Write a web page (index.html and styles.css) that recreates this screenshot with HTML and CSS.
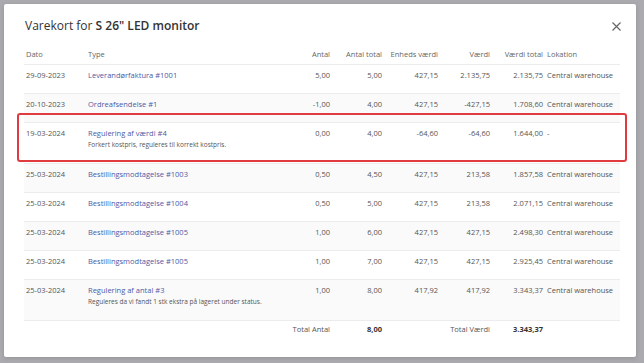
FILE: index.html
```html
<!DOCTYPE html>
<html lang="da">
<head>
  <meta charset="UTF-8">
  <meta name="viewport" content="width=device-width, initial-scale=1.0">
  <title>Varekort</title>
  <link rel="stylesheet" href="styles.css">
</head>
<body>
  <div class='modal'>
    <div class='modal-header'>
      <h1>Varekort for <b>S 26" LED monitor</b></h1>
      <button class='close' aria-label='Luk'>
        <svg width="9" height="9" viewBox="0 0 9 9"><path d="M0.5 0.5 L8.5 8.5 M8.5 0.5 L0.5 8.5" stroke="#666" stroke-width="1.2" fill="none"/></svg>
      </button>
    </div>
    <div class='table-wrap'>
      <table class='ledger'>
        <colgroup>
          <col style="width:62px"><col style="width:204px"><col style="width:42px"><col style="width:52px">
          <col style="width:56px"><col style="width:52px"><col style="width:53px"><col style="width:75px">
        </colgroup>
        <thead>
          <tr>
            <th>Dato</th><th>Type</th><th class='num'>Antal</th><th class='num'>Antal total</th>
            <th class='num'>Enheds værdi</th><th class='num'>Værdi</th><th class='num'>Værdi total</th><th>Lokation</th>
          </tr>
        </thead>
        <tbody>
          <tr>
            <td>29-09-2023</td><td><a href='#'>Leverandørfaktura #1001</a></td>
            <td class='num'>5,00</td><td class='num'>5,00</td><td class='num'>427,15</td><td class='num'>2.135,75</td><td class='num'>2.135,75</td><td>Central warehouse</td>
          </tr>
          <tr>
            <td>20-10-2023</td><td><a href='#'>Ordreafsendelse #1</a></td>
            <td class='num'>-1,00</td><td class='num'>4,00</td><td class='num'>427,15</td><td class='num'>-427,15</td><td class='num'>1.708,60</td><td>Central warehouse</td>
          </tr>
          <tr>
            <td>19-03-2024</td><td><a href='#'>Regulering af værdi #4</a><span class='note'>Forkert kostpris, reguleres til korrekt kostpris.</span></td>
            <td class='num'>0,00</td><td class='num'>4,00</td><td class='num'>-64,60</td><td class='num'>-64,60</td><td class='num'>1.644,00</td><td>-</td>
          </tr>
          <tr>
            <td>25-03-2024</td><td><a href='#'>Bestillingsmodtagelse #1003</a></td>
            <td class='num'>0,50</td><td class='num'>4,50</td><td class='num'>427,15</td><td class='num'>213,58</td><td class='num'>1.857,58</td><td>Central warehouse</td>
          </tr>
          <tr>
            <td>25-03-2024</td><td><a href='#'>Bestillingsmodtagelse #1004</a></td>
            <td class='num'>0,50</td><td class='num'>5,00</td><td class='num'>427,15</td><td class='num'>213,58</td><td class='num'>2.071,15</td><td>Central warehouse</td>
          </tr>
          <tr>
            <td>25-03-2024</td><td><a href='#'>Bestillingsmodtagelse #1005</a></td>
            <td class='num'>1,00</td><td class='num'>6,00</td><td class='num'>427,15</td><td class='num'>427,15</td><td class='num'>2.498,30</td><td>Central warehouse</td>
          </tr>
          <tr>
            <td>25-03-2024</td><td><a href='#'>Bestillingsmodtagelse #1005</a></td>
            <td class='num'>1,00</td><td class='num'>7,00</td><td class='num'>427,15</td><td class='num'>427,15</td><td class='num'>2.925,45</td><td>Central warehouse</td>
          </tr>
          <tr>
            <td>25-03-2024</td><td><a href='#'>Regulering af antal #3</a><span class='note'>Reguleres da vi fandt 1 stk ekstra på lageret under status.</span></td>
            <td class='num'>1,00</td><td class='num'>8,00</td><td class='num'>417,92</td><td class='num'>417,92</td><td class='num'>3.343,37</td><td>Central warehouse</td>
          </tr>
        </tbody>
        <tfoot>
          <tr>
            <td></td><td></td><td class='num'>Total Antal</td><td class='num'><b>8,00</b></td>
            <td></td><td class='num'>Total Værdi</td><td class='num'><b>3.343,37</b></td><td></td>
          </tr>
        </tfoot>
      </table>
      <div class='highlight'></div>
    </div>
  </div>
</body>
</html>
```

FILE: styles.css
```css
* {
  margin: 0;
  padding: 0;
  box-sizing: border-box;
}
body {
  background-color: #ababaf;
  padding: 4px 8px 6px 4px;
  font-family: "Open Sans", "Noto Sans", sans-serif;
  color: #555;
}
.modal {
  background-color: #fff;
  height: 353px;
  border-radius: 2px;
  padding: 13px 15px 0 20px;
  box-shadow: 0 1px 4px rgba(0, 0, 0, 0.15);
}
.modal-header {
  display: flex;
  justify-content: space-between;
  align-items: center;
  height: 18px;
  margin-bottom: 10px;
}
.modal-header h1 {
  font-size: 12px;
  line-height: 18px;
  font-weight: normal;
  color: #333;
  padding-left: 1px;
}
.modal-header h1 b {
  font-weight: 600;
}
.close {
  border: 0;
  background: none;
  width: 9px;
  height: 9px;
  display: flex;
}
.table-wrap {
  position: relative;
}
.ledger {
  width: 596px;
  table-layout: fixed;
  border-collapse: collapse;
  font-size: 7.5px;
}
.ledger th {
  font-weight: normal;
  color: #666;
  text-align: left;
  line-height: 15px;
  padding: 2px 2px 2px;
  border-bottom: 1px solid #ececec;
  white-space: nowrap;
}
.ledger td {
  line-height: 15px;
  padding: 3px 2px 10px;
  vertical-align: top;
  white-space: nowrap;
}
.ledger tbody td {
  border-bottom: 1px solid #ececec;
}
.ledger tbody tr:nth-child(even) {
  background-color: #fafafa;
}
.ledger tfoot td {
  padding-top: 1px;
}
.ledger tfoot b {
  font-weight: bold;
  color: #333;
}
.ledger .num {
  text-align: right;
}
.ledger a {
  color: #4c5aa6;
  text-decoration: none;
}
.note {
  display: block;
  font-size: 6.5px;
  line-height: 10px;
  margin: -1px 0 3px;
  color: #555;
}
.highlight {
  position: absolute;
  left: -7px;
  top: 68px;
  width: 610px;
  height: 49px;
  border: 2px solid #e03b41;
  border-radius: 3px;
}
```
